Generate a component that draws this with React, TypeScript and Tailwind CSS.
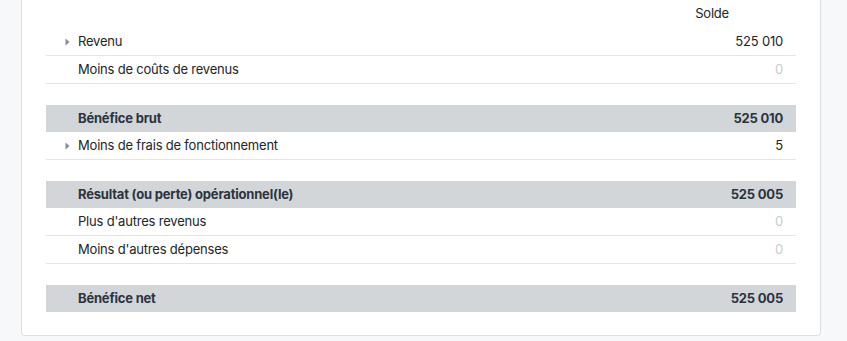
import React from "react";

type Row =
  | { kind: "row"; label: string; value: string; zero?: boolean; caret?: boolean }
  | { kind: "band"; label: string; value: string }
  | { kind: "spacer" };

const rows: Row[] = [
  { kind: "row", label: "Revenu", value: "525 010", caret: true },
  { kind: "row", label: "Moins de coûts de revenus", value: "0", zero: true },
  { kind: "spacer" },
  { kind: "band", label: "Bénéfice brut", value: "525 010" },
  { kind: "row", label: "Moins de frais de fonctionnement", value: "5", caret: true },
  { kind: "spacer" },
  { kind: "band", label: "Résultat (ou perte) opérationnel(le)", value: "525 005" },
  { kind: "row", label: "Plus d'autres revenus", value: "0", zero: true },
  { kind: "row", label: "Moins d'autres dépenses", value: "0", zero: true },
  { kind: "spacer" },
  { kind: "band", label: "Bénéfice net", value: "525 005" },
];

function Caret() {
  return (
    <svg width="5" height="8" viewBox="0 0 5 8" className="absolute left-[19px] top-1/2 -translate-y-1/2">
      <path d="M0.5 0.5 L4.5 4 L0.5 7.5 Z" fill="#868e96" />
    </svg>
  );
}

export default function App() {
  return (
    <div
      className="min-h-[341px] bg-[#f7f8fa] pl-[21px] pr-[26px] pb-[5px] text-[13px] tracking-[-0.2px] text-[#212529]"
      style={{ fontFamily: "Inter, 'Noto Sans', sans-serif" }}
    >
      <div className="rounded-b-[4px] border-x border-b border-[#dcdfe3] bg-white px-6 pb-[23px]">
        <div className="flex h-[28px] items-center justify-end pr-[67px]">
          <span>Solde</span>
        </div>
        {rows.map((r, i) => {
          if (r.kind === "spacer") return <div key={i} className="h-[21px]" />;
          if (r.kind === "band")
            return (
              <div
                key={i}
                className="flex h-[27px] items-center justify-between bg-[#d2d6d9] pl-8 pr-[13px] font-bold text-[#2b3340]"
              >
                <span>{r.label}</span>
                <span>{r.value}</span>
              </div>
            );
          return (
            <div
              key={i}
              className="relative flex h-[28px] items-center justify-between border-b border-[#e3e5e8] pl-8 pr-[13px]"
            >
              {r.caret && <Caret />}
              <span>{r.label}</span>
              <span className={r.zero ? "text-[#c9cdd1]" : ""}>{r.value}</span>
            </div>
          );
        })}
      </div>
    </div>
  );
}
